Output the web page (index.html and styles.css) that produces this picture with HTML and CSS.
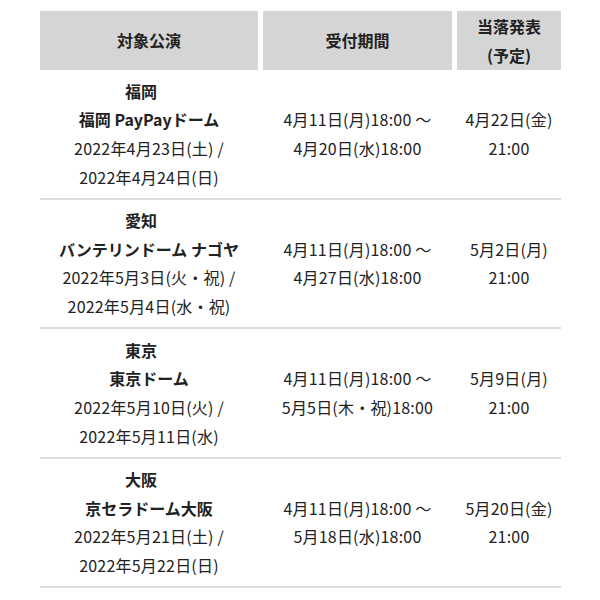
FILE: index.html
```html
<!DOCTYPE html>
<html lang="ja">
<head>
<meta charset="utf-8">
<link rel="stylesheet" href="styles.css">
</head>
<body>
<div class="schedule">
  <div class="head">
    <div class="hcell">対象公演</div>
    <div class="hcell">受付期間</div>
    <div class="hcell">当落発表<br>(予定)</div>
  </div>
  <div class="row">
    <div class="cell">
      <div class="pref">福岡</div>
      <div class="hall">福岡 PayPayドーム</div>
      <div>2022年4月23日(土) /</div>
      <div>2022年4月24日(日)</div>
    </div>
    <div class="cell">4月11日(月)18:00 〜<br>4月20日(水)18:00</div>
    <div class="cell">4月22日(金)<br>21:00</div>
  </div>
  <div class="row">
    <div class="cell">
      <div class="pref">愛知</div>
      <div class="hall">バンテリンドーム ナゴヤ</div>
      <div>2022年5月3日(火・祝) /</div>
      <div>2022年5月4日(水・祝)</div>
    </div>
    <div class="cell">4月11日(月)18:00 〜<br>4月27日(水)18:00</div>
    <div class="cell">5月2日(月)<br>21:00</div>
  </div>
  <div class="row">
    <div class="cell">
      <div class="pref">東京</div>
      <div class="hall">東京ドーム</div>
      <div>2022年5月10日(火) /</div>
      <div>2022年5月11日(水)</div>
    </div>
    <div class="cell">4月11日(月)18:00 〜<br>5月5日(木・祝)18:00</div>
    <div class="cell">5月9日(月)<br>21:00</div>
  </div>
  <div class="row">
    <div class="cell">
      <div class="pref">大阪</div>
      <div class="hall">京セラドーム大阪</div>
      <div>2022年5月21日(土) /</div>
      <div>2022年5月22日(日)</div>
    </div>
    <div class="cell">4月11日(月)18:00 〜<br>5月18日(水)18:00</div>
    <div class="cell">5月20日(金)<br>21:00</div>
  </div>
</div>
</body>
</html>
```
FILE: styles.css
```css
html, body {
  margin: 0;
  padding: 0;
  background: #fff;
}
body {
  font-family: "Noto Sans CJK JP", "Noto Sans", sans-serif;
  font-size: 16px;
  line-height: 28.7px;
  color: #222;
}
.schedule {
  width: 521px;
  margin: 11px 0 0 40px;
}
.head,
.row {
  display: grid;
  grid-template-columns: 218px 189px 104px;
  column-gap: 5px;
}
.hcell {
  background: #d5d5d5;
  font-weight: 700;
  text-align: center;
  display: flex;
  align-items: center;
  justify-content: center;
  height: 59px;
}
.row {
  border-bottom: 2px solid #dedede;
  padding: 6.5px 0 6.2px;
}
.cell {
  text-align: center;
  display: flex;
  flex-direction: column;
  justify-content: center;
  letter-spacing: 0.2px;
}
.pref,
.hall {
  font-weight: 700;
  letter-spacing: 0;
}
.pref {
  padding-right: 1em;
}
```
